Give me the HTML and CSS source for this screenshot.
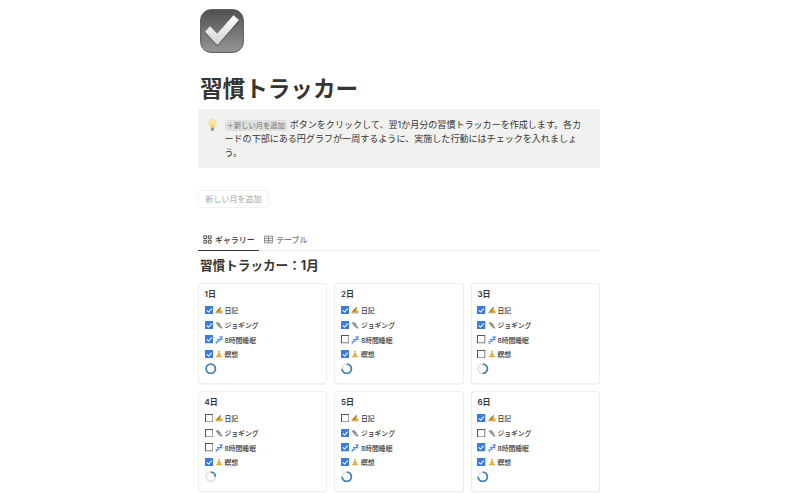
FILE: index.html
```html
<!DOCTYPE html>
<html lang="ja">
<head>
    <meta charset="UTF-8">
    <meta name="viewport" content="width=device-width, initial-scale=1.0">
    <title>習慣トラッカー</title>
    <link rel="stylesheet" href="styles.css">
</head>
<body>
    <!-- Shared icons -->
    <svg class="sprite">
        <symbol id="on" viewBox="0 0 16 16">
            <rect width="16" height="16" fill="#3b7ddd"/>
            <path d="M3.5 8.2l3.2 3.2 6-6.4" fill="none" stroke="#fff" stroke-width="1.9"/>
        </symbol>
        <symbol id="off" viewBox="0 0 16 16">
            <rect x="1" y="1" width="14" height="14" fill="#fff" stroke="#484744" stroke-width="1.7"/>
        </symbol>
        <symbol id="write" viewBox="0 0 16 16">
            <path d="M1 13.6h14" stroke="#5c5643" stroke-width="1.5"/>
            <path d="M1 12.5L3 9l4-3 3 .5 5 2.5v3.5l-5 1z" fill="#f8b928"/>
            <path d="M3 11.5L10.5 2l1.8 1.4L6 11z" fill="#7a5a32"/>
            <path d="M6 9.5l5 .4M7 11.5h4" stroke="#b77a12" stroke-width=".9"/>
        </symbol>
        <symbol id="shoe" viewBox="0 0 16 16">
            <path d="M2 3l4-1.5 3 4 4.5 5.5 1 3.5-4-.8-5-5z" fill="#a5a5a5"/>
            <path d="M2 3l3 5 5 5.2 4.5 1.3" fill="none" stroke="#666" stroke-width="1.3"/>
            <path d="M6 6l3-1.5M8 8.5L11 7" stroke="#555" stroke-width="1.2"/>
        </symbol>
        <symbol id="zzz" viewBox="0 0 16 16">
            <g fill="none" stroke="#3978df">
                <path d="M8.5 2h5.8L10 7.5h5.2" stroke-width="2.2"/>
                <path d="M4.2 7h4L5 11.2h4" stroke-width="1.9"/>
                <path d="M1 11.4h3L1.6 14.5h3" stroke-width="1.6"/>
            </g>
        </symbol>
        <symbol id="yoga" viewBox="0 0 16 16">
            <circle cx="8" cy="3.5" r="2.2" fill="#efb32f"/>
            <path d="M6 6h4l2 5H4z" fill="#e9ac38"/>
            <path d="M7 7h2v4H7z" fill="#8aa7ad"/>
            <path d="M1 14l3-3.5h8l3 3.5z" fill="#f5b52e"/>
            <path d="M3 13.7h10" stroke="#c28b2a"/>
        </symbol>
    </svg>

    <div class="page">
        <svg class="page-icon" viewBox="0 0 44 44">
            <defs>
                <linearGradient id="box" x1="0" y1="0" x2="0" y2="1">
                    <stop offset="0" stop-color="#505050"/>
                    <stop offset="1" stop-color="#969696"/>
                </linearGradient>
                <linearGradient id="tick" x1="0" y1="0" x2="0" y2="1">
                    <stop offset="0" stop-color="#fff"/>
                    <stop offset="1" stop-color="#d2d2d2"/>
                </linearGradient>
            </defs>
            <rect x=".6" y=".6" width="42.8" height="42.8" rx="10.5" fill="url(#box)" stroke="#5a5a5a" stroke-width="1"/>
            <path d="M5 23.5l5-5.5 7.2 7.5L33.5 7l5.4 4.7-21.5 25z" fill="#444" opacity=".5" transform="translate(0 .8)"/>
            <path d="M5 22.7l5-5.5 7.2 7.5L33.5 6.3l5.4 4.7-21.5 25z" fill="url(#tick)"/>
        </svg>
        <h1>習慣トラッカー</h1>

        <div class="callout">
            <svg class="bulb" viewBox="0 0 12 14">
                <path d="M4 9.3C3.7 7.7 1.8 6.8 1.8 4.6a4.2 4.2 0 018.4 0c0 2.2-1.9 3.1-2.2 4.7z" fill="#fbe9a0" stroke="#eed48a" stroke-width=".7"/>
                <path d="M4.7 5l.8 4h1l.8-4" fill="none" stroke="#eaa92e" stroke-width=".7"/>
                <path d="M4.2 9.5h3.6V12L6.8 13H5.2l-1-1z" fill="#969a9b"/>
            </svg>
            <p><span class="chip">&#65291;新しい月を追加</span> ボタンをクリックして、翌1か月分の習慣トラッカーを作成します。各カ<br>ードの下部にある円グラフが一周するように、実施した行動にはチェックを入れましょ<br>う。</p>
        </div>

        <button class="add">新しい月を追加</button>

        <div class="tabs">
            <div class="tab active">
                <svg viewBox="0 0 16 16"><path d="M1.5 1.5h5v5h-5zM9.5 1.5h5v5h-5zM1.5 9.5h5v5h-5zM9.5 9.5h5v5h-5z"/></svg>
                ギャラリー
            </div>
            <div class="tab">
                <svg viewBox="0 0 16 16"><path d="M1 2h14v12H1zM1 6h14M1 10h14M8 2v12"/></svg>
                テーブル
            </div>
        </div>
        <h2>習慣トラッカー&#65306;1月</h2>

        <div class="gallery">
            <div class="card">
                <h3>1日</h3>
                <div class="habit"><svg><use href="#on"/></svg><svg><use href="#write"/></svg>日記</div>
                <div class="habit"><svg><use href="#on"/></svg><svg><use href="#shoe"/></svg>ジョギング</div>
                <div class="habit"><svg><use href="#on"/></svg><svg><use href="#zzz"/></svg>8時間睡眠</div>
                <div class="habit"><svg><use href="#on"/></svg><svg><use href="#yoga"/></svg>瞑想</div>
                <svg class="ring" viewBox="0 0 12 12"><circle cx="6" cy="6" r="4.8"/><circle class="done" cx="6" cy="6" r="4.8" pathLength="100" stroke-dasharray="100 0"/></svg>
            </div>
            <div class="card">
                <h3>2日</h3>
                <div class="habit"><svg><use href="#on"/></svg><svg><use href="#write"/></svg>日記</div>
                <div class="habit"><svg><use href="#on"/></svg><svg><use href="#shoe"/></svg>ジョギング</div>
                <div class="habit"><svg><use href="#off"/></svg><svg><use href="#zzz"/></svg>8時間睡眠</div>
                <div class="habit"><svg><use href="#on"/></svg><svg><use href="#yoga"/></svg>瞑想</div>
                <svg class="ring" viewBox="0 0 12 12"><circle cx="6" cy="6" r="4.8"/><circle class="done" cx="6" cy="6" r="4.8" pathLength="100" stroke-dasharray="75 25"/></svg>
            </div>
            <div class="card">
                <h3>3日</h3>
                <div class="habit"><svg><use href="#on"/></svg><svg><use href="#write"/></svg>日記</div>
                <div class="habit"><svg><use href="#on"/></svg><svg><use href="#shoe"/></svg>ジョギング</div>
                <div class="habit"><svg><use href="#off"/></svg><svg><use href="#zzz"/></svg>8時間睡眠</div>
                <div class="habit"><svg><use href="#off"/></svg><svg><use href="#yoga"/></svg>瞑想</div>
                <svg class="ring" viewBox="0 0 12 12"><circle cx="6" cy="6" r="4.8"/><circle class="done" cx="6" cy="6" r="4.8" pathLength="100" stroke-dasharray="50 50"/></svg>
            </div>
            <div class="card">
                <h3>4日</h3>
                <div class="habit"><svg><use href="#off"/></svg><svg><use href="#write"/></svg>日記</div>
                <div class="habit"><svg><use href="#off"/></svg><svg><use href="#shoe"/></svg>ジョギング</div>
                <div class="habit"><svg><use href="#off"/></svg><svg><use href="#zzz"/></svg>8時間睡眠</div>
                <div class="habit"><svg><use href="#on"/></svg><svg><use href="#yoga"/></svg>瞑想</div>
                <svg class="ring" viewBox="0 0 12 12"><circle cx="6" cy="6" r="4.8"/><circle class="done" cx="6" cy="6" r="4.8" pathLength="100" stroke-dasharray="25 75"/></svg>
            </div>
            <div class="card">
                <h3>5日</h3>
                <div class="habit"><svg><use href="#off"/></svg><svg><use href="#write"/></svg>日記</div>
                <div class="habit"><svg><use href="#on"/></svg><svg><use href="#shoe"/></svg>ジョギング</div>
                <div class="habit"><svg><use href="#on"/></svg><svg><use href="#zzz"/></svg>8時間睡眠</div>
                <div class="habit"><svg><use href="#on"/></svg><svg><use href="#yoga"/></svg>瞑想</div>
                <svg class="ring" viewBox="0 0 12 12"><circle cx="6" cy="6" r="4.8"/><circle class="done" cx="6" cy="6" r="4.8" pathLength="100" stroke-dasharray="75 25"/></svg>
            </div>
            <div class="card">
                <h3>6日</h3>
                <div class="habit"><svg><use href="#on"/></svg><svg><use href="#write"/></svg>日記</div>
                <div class="habit"><svg><use href="#off"/></svg><svg><use href="#shoe"/></svg>ジョギング</div>
                <div class="habit"><svg><use href="#on"/></svg><svg><use href="#zzz"/></svg>8時間睡眠</div>
                <div class="habit"><svg><use href="#on"/></svg><svg><use href="#yoga"/></svg>瞑想</div>
                <svg class="ring" viewBox="0 0 12 12"><circle cx="6" cy="6" r="4.8"/><circle class="done" cx="6" cy="6" r="4.8" pathLength="100" stroke-dasharray="75 25"/></svg>
            </div>
        </div>
    </div>
</body>
</html>
```
FILE: styles.css
```css
* {
    box-sizing: border-box;
}

body {
    margin: 0;
    height: 493px;
    overflow: hidden;
    background: #fff;
    color: #37352f;
    font-family: Inter, "Noto Sans CJK JP", sans-serif;
}

h1, h2, h3, p {
    margin: 0;
}

svg {
    display: block;
    flex-shrink: 0;
}

.sprite {
    display: none;
}

.page {
    width: 402px;
    margin: 0 auto 0 198px;
    padding-top: 9px;
}

.page-icon {
    width: 44px;
    height: 44px;
    margin-left: 2px;
}

h1 {
    height: 30px;
    margin: 21px 0 5px 2px;
    font-size: 22.6px;
    line-height: 30px;
    font-weight: 700;
}

.callout {
    display: flex;
    height: 59px;
    padding: 8.6px 0 0 9px;
    background: #f1f1ef;
    border-radius: 2px;
}

.bulb {
    width: 11px;
    height: 13px;
    margin: 1px 6.5px 0 0;
}

.callout p {
    font-size: 9.05px;
    line-height: 13.5px;
    white-space: nowrap;
}

.chip {
    padding: 1px 2.3px;
    border-radius: 2px;
    background: #dfdfdc;
    color: #73726e;
    font-size: 7.25px;
}

.add {
    display: block;
    width: 71px;
    height: 18px;
    margin: 22px 0 0;
    padding: 0;
    border: 1px solid #f3f3f2;
    border-radius: 2px;
    background: #fff;
    color: #a5a4a1;
    font: 8px/16px Inter, "Noto Sans CJK JP", sans-serif;
}

.tabs {
    display: flex;
    height: 21px;
    margin-top: 22px;
    border-bottom: 1px solid #ececeb;
}

.tab {
    display: flex;
    align-items: center;
    height: 21px;
    padding: 0 4.5px 2px;
    color: #7b7a76;
    font-size: 7.95px;
    font-weight: 500;
}

.tab svg {
    width: 9px;
    height: 9px;
    margin-right: 3.5px;
    fill: none;
    stroke: currentColor;
    stroke-width: 1.5;
}

.tab.active {
    padding-bottom: 1px;
    color: #37352f;
    border-bottom: 1.5px solid #37352f;
}

h2 {
    height: 18px;
    margin: 6px 0 8.5px 2px;
    font-size: 12.6px;
    line-height: 18px;
    font-weight: 700;
}

.gallery {
    display: grid;
    grid-template-columns: repeat(3, 1fr);
    gap: 9px;
    padding: 0 .6px 0 1px;
}

.card {
    height: 99px;
    padding: 3.3px 5.5px;
    border-radius: 2px;
    box-shadow: 0 0 0 1px #efefee, 0 1px 2px #dddddc;
}

h3 {
    height: 15px;
    margin-bottom: 1px;
    font-size: 8px;
    line-height: 15px;
    font-weight: 600;
}

.habit {
    display: flex;
    align-items: center;
    height: 14.7px;
    font-size: 6.8px;
    font-weight: 500;
}

.habit svg {
    width: 8.5px;
    height: 8.5px;
    margin-right: 2px;
}

.habit svg + svg {
    width: 8px;
    height: 8px;
    margin-right: 1.5px;
}

.ring {
    width: 11.5px;
    height: 11.5px;
    margin-top: 1.2px;
    fill: none;
    stroke: #e3e3e2;
    stroke-width: 1.9;
    transform: rotate(-90deg);
}

.done {
    stroke: #4b86b4;
}
```
